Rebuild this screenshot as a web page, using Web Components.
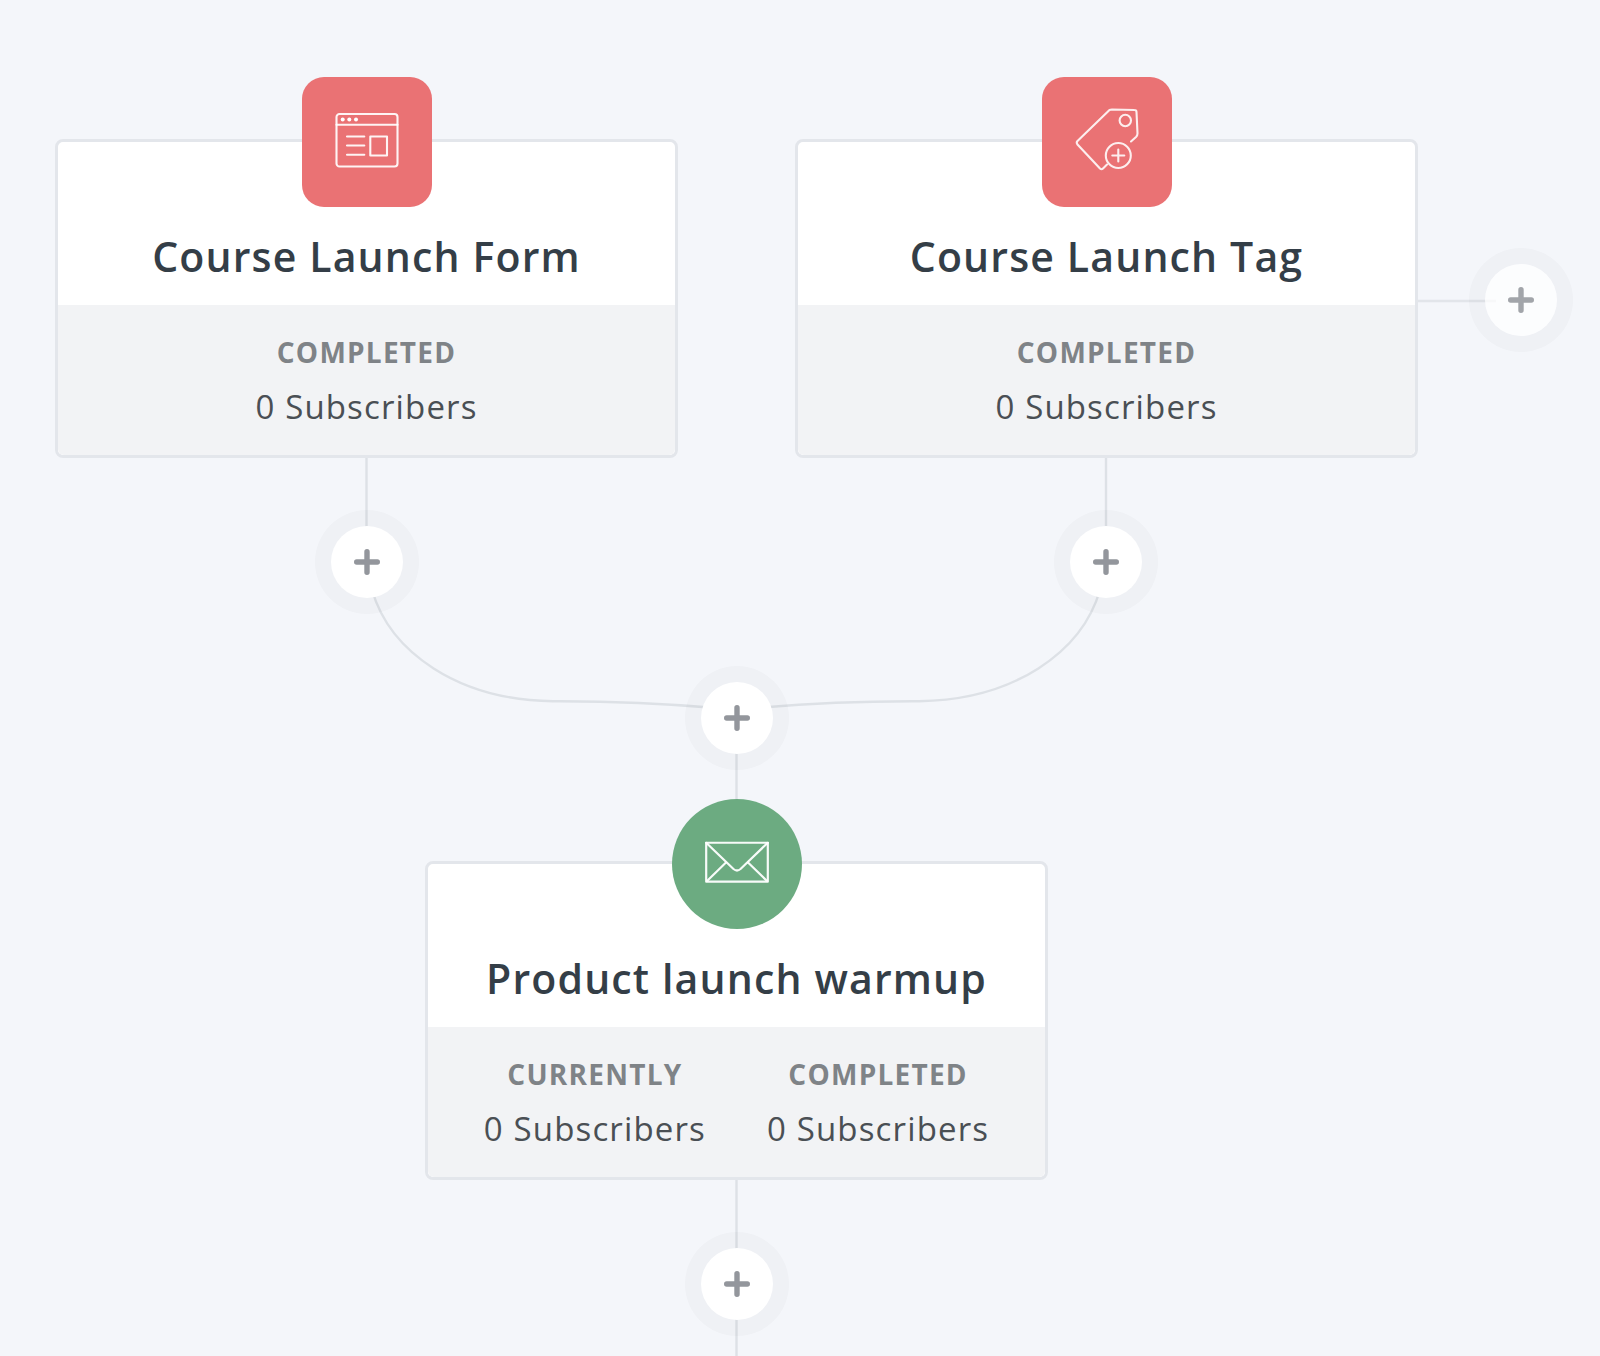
<!DOCTYPE html>
<html lang="en"><head><meta charset="utf-8"><title>Funnel</title>
<style>
html,body{margin:0;padding:0;background:#f4f6fa}
body{font-family:"Open Sans",sans-serif;width:1600px;height:1356px;overflow:hidden}
</style></head><body>
<flow-canvas>
  <flow-step style="left:55px;top:139px" title-text="Course Launch Form" kind="form">
    <flow-stat label="COMPLETED" value="0 Subscribers"></flow-stat>
  </flow-step>
  <flow-step style="left:795px;top:139px" title-text="Course Launch Tag" kind="tag">
    <flow-stat label="COMPLETED" value="0 Subscribers"></flow-stat>
  </flow-step>
  <flow-step style="left:425px;top:861px" title-text="Product launch warmup" kind="mail">
    <flow-stat label="CURRENTLY" value="0 Subscribers"></flow-stat>
    <flow-stat label="COMPLETED" value="0 Subscribers"></flow-stat>
  </flow-step>
  <flow-add style="left:366.500px;top:562px"></flow-add>
  <flow-add style="left:1106px;top:562px"></flow-add>
  <flow-add style="left:736.500px;top:718px"></flow-add>
  <flow-add style="left:736.500px;top:1284px"></flow-add>
  <flow-add style="left:1521px;top:300px" faded></flow-add>
</flow-canvas>
<script>
class FlowCanvas extends HTMLElement{
  constructor(){super();this.attachShadow({mode:'open'}).innerHTML=`
  <style>
    :host{display:block;position:relative;width:1600px;height:1356px;background:#f4f6fa}
    svg{position:absolute;left:0;top:0}
  </style>
  <svg width="1600" height="1356" viewBox="0 0 1600 1356" fill="none" stroke="#dde1e6" stroke-width="2.400">
    <path d="M366.500 457V540"/><path d="M1106 457V540"/>
    <path d="M736.500 740V810"/><path d="M736.500 1180V1260"/><path d="M736.500 1310V1356"/>
    <path d="M372 590C390 652 458 700 553 701.200C605 701 660 703 716 708" />
    <path d="M1100 590C1082 652 1014 700 919 701.200C867 701 812 703 757 708" />
    <path d="M1417 301H1496" stroke="#dde1e6" stroke-opacity=".8"/>
  </svg>
  <slot></slot>`;}
}
const ICONS={
 form:`<svg width="64" height="56" viewBox="0 0 64 56" fill="none" stroke="#fff" stroke-opacity=".92" stroke-width="2.100" stroke-linecap="round" stroke-linejoin="round">
   <rect x="1.500" y="1.500" width="61" height="52.500" rx="3"/><path d="M1.500 12.300H62.500"/>
   <circle cx="7.700" cy="7" r="2" fill="#fff" stroke="none"/><circle cx="14.300" cy="7" r="2" fill="#fff" stroke="none"/><circle cx="21" cy="7" r="2" fill="#fff" stroke="none"/>
   <path d="M12 24H29.300M12 33H29.300M12 42.300H29.300"/><rect x="35.300" y="24" width="16.700" height="19"/></svg>`,
 tag:`<svg width="66" height="66" viewBox="0 0 66 66" fill="none" stroke="#fff" stroke-opacity=".88" stroke-width="2.100" stroke-linecap="round" stroke-linejoin="round">
   <path d="M33 57L29 61Q27.500 62.500 26 61L3.500 37Q2 35 3.500 33.500L35.500 2.500Q36.500 2 38 2L60.500 2.500Q62.500 2.500 62.500 4.500L63.500 26Q63.500 28 62 29.500L57 34"/>
   <circle cx="51.300" cy="13" r="5.700"/><circle cx="44.300" cy="48" r="12.500"/><path d="M44.300 42V54M38.300 48H50.300"/></svg>`,
 mail:`<svg width="64" height="42" viewBox="0 0 64 42" fill="none" stroke="#fff" stroke-opacity=".95" stroke-width="2.200" stroke-linecap="round" stroke-linejoin="round">
   <rect x="1.200" y="1.200" width="61.600" height="39"/><path d="M1.200 1.200L28.500 27.500Q32 30.500 35.500 27.500L62.800 1.200"/><path d="M2 39.500L21 21M62 39.500L43 21"/></svg>`
};
class FlowStep extends HTMLElement{
  constructor(){super();this.attachShadow({mode:'open'});}
  connectedCallback(){
    const kind=this.getAttribute('kind'),t=this.getAttribute('title-text');
    this.shadowRoot.innerHTML=`
    <style>
      :host{display:flex;flex-direction:column;position:absolute;box-sizing:border-box;width:623px;height:319px;
        border:3px solid #e3e6eb;border-radius:8px;background:#fff;overflow:visible}
      .badge{position:absolute;left:50%;top:-65px;margin-left:-65px;width:130px;height:130px;display:flex;align-items:center;justify-content:center;
        background:#ea7274;border-radius:22px}
      .badge.mail{background:#6cab81;border-radius:50%;}
      .badge svg{transform:translateY(-1.500px)}
      .head{height:163px;box-sizing:border-box;padding-top:86.500px;text-align:center;color:#343e47;font-size:41px;font-weight:600;line-height:54px;letter-spacing:1.150px;white-space:nowrap}
      .stats{flex:1;display:flex;justify-content:center;gap:61px;background:#f2f3f5;border-radius:0 0 6px 6px;padding-top:28px;box-sizing:border-box}
    </style>
    <div class="badge ${kind}">${ICONS[kind]}</div>
    <div class="head">${t}</div>
    <div class="stats"><slot></slot></div>`;
  }
}
class FlowStat extends HTMLElement{
  constructor(){super();this.attachShadow({mode:'open'});}
  connectedCallback(){
    this.shadowRoot.innerHTML=`
    <style>
      :host{display:block;text-align:center;white-space:nowrap}
      .l{color:#7f8387;font-size:28px;font-weight:700;line-height:38px;letter-spacing:1.250px}
      .v{color:#4a4f54;font-size:33px;font-weight:400;line-height:45px;margin-top:13px;letter-spacing:1.150px}
    </style>
    <div class="l">${this.getAttribute('label')}</div>
    <div class="v">${this.getAttribute('value')}</div>`;
  }
}
class FlowAdd extends HTMLElement{
  constructor(){super();this.attachShadow({mode:'open'}).innerHTML=`
  <style>
    :host{position:absolute;display:flex;width:72px;height:72px;margin:-36px 0 0 -36px;border-radius:50%;background:#fff;
      box-shadow:0 0 0 16px rgba(40,60,50,.024);align-items:center;justify-content:center}
    :host([faded]){background:rgba(255,255,255,.72)}
    :host([faded]) svg{opacity:.85}
  </style>
  <svg width="26" height="26" viewBox="0 0 26 26" fill="none" stroke="#93969c" stroke-width="5.400" stroke-linecap="round"><path d="M13 2.700V23.300M2.700 13H23.300"/></svg>`;}
}
customElements.define('flow-canvas',FlowCanvas);
customElements.define('flow-step',FlowStep);
customElements.define('flow-stat',FlowStat);
customElements.define('flow-add',FlowAdd);
</script>
</body></html>
